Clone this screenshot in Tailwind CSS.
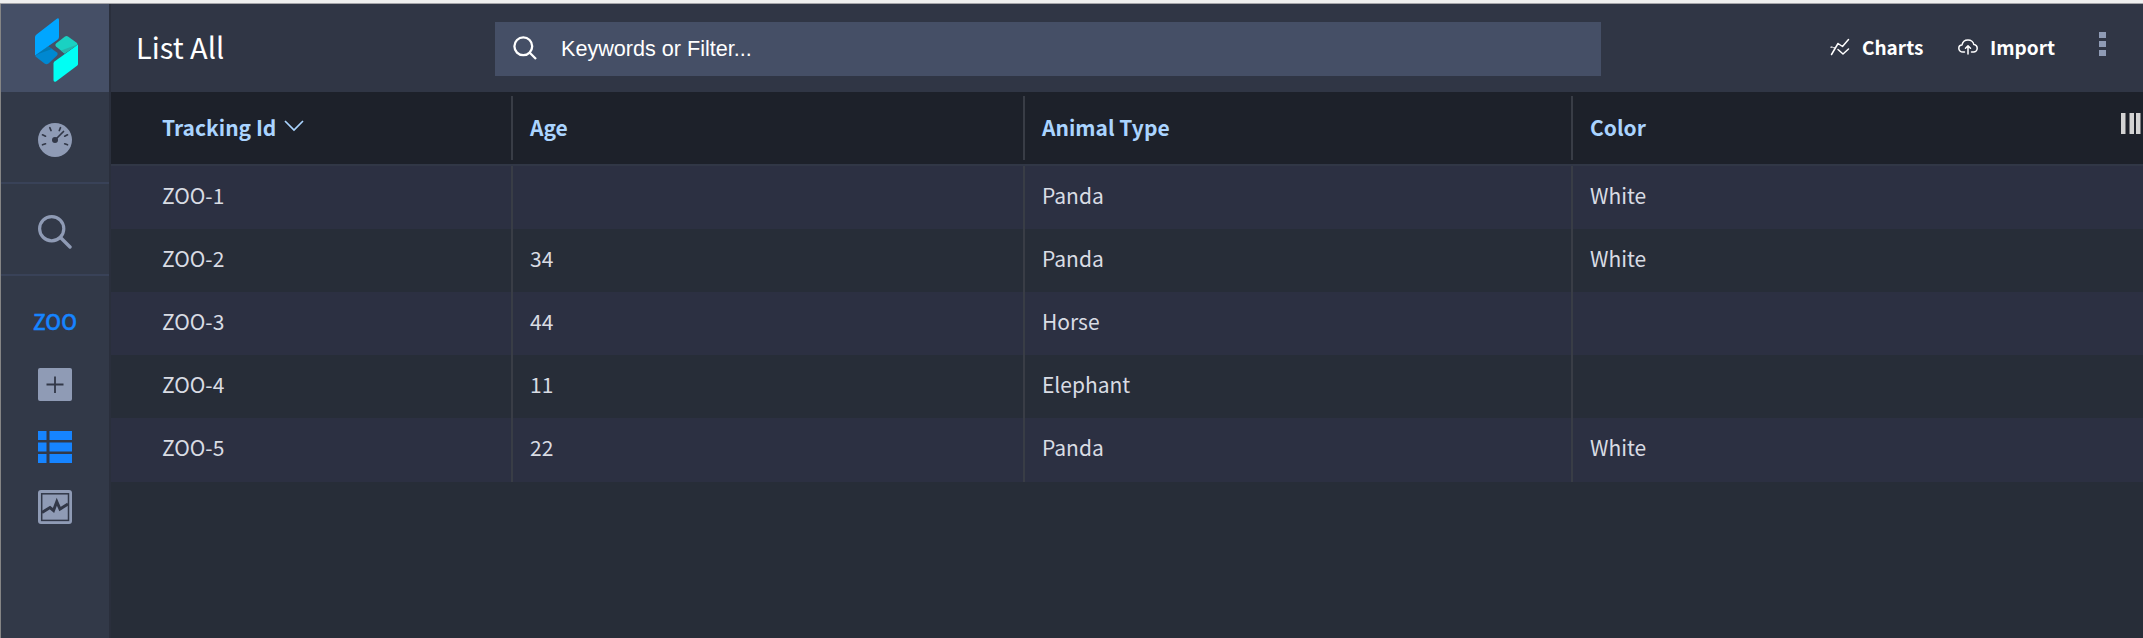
<!DOCTYPE html>
<html lang="en">
<head>
<meta charset="utf-8">
<title>List All</title>
<script src="https://cdn.jsdelivr.net/npm/@tailwindcss/browser@4"></script>
</head>
<body class="w-[2143px] h-[638px] overflow-hidden bg-[#272d38] font-['Noto_Sans_CJK_SC',sans-serif] text-[#d9dce4]">
<div class="flex flex-col h-[638px]">
  <div class="h-1 shrink-0 bg-[#efefef] border-b border-[#a5a5a9]"></div>
  <div class="flex flex-1 border-l border-[#858585]">
    <aside class="w-[110px] shrink-0 bg-[#323948] border-r-2 border-[#2a2f3c] flex flex-col items-stretch">
      <div class="h-[88px] shrink-0 bg-[#454f66] pl-[34px] pt-[14px]">
        <svg class="w-[43px] h-[64px]" viewBox="0 0 43 64">
          <path d="M.5 37.500 13.500 28.500 22 34.500Q23.500 36 22 37.500L13.500 45.500Q11.500 47 9.500 45.500L.5 38.500Z" fill="#0088d1"/>
          <path d="M.5 37 13.500 28.500 17 31Z" fill="#0079b4"/>
          <path d="M42.500 26.500 29.500 35.500 21 28.500Q19.500 27 21 25.500L30 18.500Q31.500 17.500 33 18.500L42 25Z" fill="#1ad1c2"/>
          <path d="M42.500 26.500 29.500 35.500 26 32.500Z" fill="#25b5ab"/>
          <path d="M0 19Q0 17.500 1.500 16.500L21.500 1Q24 -.8 24 2V19Q24 20.500 22.500 21.700L0 37.500Z" fill="#00a6ff"/>
          <path d="M43 26.500V46Q43 47 42 47.800L21 63.500Q18.500 64.500 18.500 62V45.500Q18.500 44.500 19.500 43.500Z" fill="#00fff4"/>
        </svg>
      </div>
      <div class="h-[92px] shrink-0 border-b-2 border-[#394258] flex items-center justify-center pt-1.5">
        <svg class="w-[34px] h-[34px]" viewBox="0 0 34 34">
          <circle cx="17" cy="17" r="17" fill="#8f9bb5"/>
          <g stroke="#323848" stroke-width="1.700" stroke-linecap="round" fill="none"><path d="M4.500 21.800 7.500 20.800M4.500 11.800 7.500 13.200M11.800 4.700 13 7.500M22.500 4.700 21.300 7.500M29.500 11.800 26.700 13.200M29.500 21.800 26.700 20.800M17 17 25.500 8.500"/></g>
          <circle cx="17" cy="17" r="3" fill="#323848"/>
        </svg>
      </div>
      <div class="h-[92px] shrink-0 border-b-2 border-[#394258] flex items-center justify-center pt-1.5">
        <svg class="w-[34px] h-[34px]" viewBox="0 0 34 34" fill="none" stroke="#8f9bb5"><circle cx="13.700" cy="13.700" r="12.100" stroke-width="3.200"/><path d="M22.500 22.500 32 32" stroke-width="3.400" stroke-linecap="round"/></svg>
      </div>
      <div class="flex flex-col items-center pt-[29px]">
        <div class="h-8 leading-8 text-[21px] font-medium text-[#1684ff] [-webkit-text-stroke:0.4px_#1684ff]">ZOO</div>
        <svg class="mt-[31px] w-[34px] h-[33px]" viewBox="0 0 34 33"><rect width="34" height="33" rx="2" fill="#8f9bb5"/><path d="M17 8.500V25M8.500 16.500H25.500" stroke="#323848" stroke-width="1.800"/></svg>
        <svg class="mt-[30px] w-[34px] h-[32px]" viewBox="0 0 34 32" fill="#1684ff"><path d="M0 0H8.500V9H0ZM11.500 0H34V9H11.500ZM0 11.500H8.500V20.500H0ZM11.500 11.500H34V20.500H11.500ZM0 23H8.500V32H0ZM11.500 23H34V32H11.500Z"/></svg>
        <svg class="mt-[27px] w-[34px] h-[34px]" viewBox="0 0 34 34"><rect width="34" height="34" rx="3" fill="#8f9bb5"/><rect x="3.700" y="3.800" width="26.800" height="26.600" fill="none" stroke="#323848" stroke-width="1.500"/><path d="M4 22.500 12 17.500 15.500 20.500 18.800 11.800 22 19 30 14" fill="none" stroke="#323848" stroke-width="3"/></svg>
      </div>
    </aside>
    <main class="flex-1 flex flex-col">
      <header class="h-[88px] shrink-0 bg-[#303645] flex items-center">
        <h1 class="w-[384px] pl-[25px] pb-[3px] text-[29px] text-white">List All</h1>
        <div class="w-[1106px] h-[54px] mt-0.5 bg-[#454f66] flex items-center pl-[18px]">
          <svg class="w-[24px] h-[24px] -mt-0.5" viewBox="0 0 24 24" fill="none" stroke="#fff" stroke-width="2.300"><circle cx="10.300" cy="10.300" r="8.900"/><path d="M16.500 16.500 23 23"/></svg>
          <span class="ml-[24px] font-['Liberation_Sans',sans-serif] text-[21.600px] text-white">Keywords or Filter...</span>
        </div>
        <div class="ml-[229px] flex items-center text-white font-bold text-[19px] pb-[2px]">
          <svg class="w-5 h-[18px] mr-3" viewBox="0 0 20 18" fill="none" stroke="#fff" stroke-width="1.500" stroke-linejoin="round" stroke-linecap="round"><path d="M1.500 16.500 8 5.500 12.500 8.500 18.500 1.500M8 11.500 13 16 18.500 11"/><path d="M1 9.200H2.200M3.800 9.700H4.200" stroke-width="1.300"/></svg>
          <span class="w-[96px]">Charts</span>
          <svg class="w-5 h-[16px] mr-3" viewBox="0 0 20 16" fill="none" stroke="#fff" stroke-width="1.500" stroke-linecap="round" stroke-linejoin="round"><path d="M6.500 13H5C2.500 13 .8 11.500 .8 9.300S2.500 6 4 6C4.500 3 7 1 10 1S15.500 3 15.800 5.500C17.800 5.800 19.200 7.300 19.200 9.300S17.500 13 15.500 13H13.500M10 15V7M7.500 9.200 10 6.700 12.500 9.200"/></svg>
          <span class="w-[109px]">Import</span>
        </div>
        <div class="flex flex-col gap-[3px] mb-[8px]"><i class="w-[7px] h-1.5 bg-[#8f9bb5]"></i><i class="w-[7px] h-1.5 bg-[#8f9bb5]"></i><i class="w-[7px] h-1.5 bg-[#8f9bb5]"></i></div>
      </header>
      <div class="h-[74px] shrink-0 bg-[#1d212a] border-b-2 border-[#313746] grid grid-cols-[402px_512px_548px_1fr] items-center text-[21px] font-bold text-[#aad4ff]">
        <div class="h-16 border-r-2 border-[#393d46] pl-[51px] flex items-center"><span>Tracking Id</span>
          <svg class="ml-2 -mt-[5px] w-5 h-3" viewBox="0 0 20 12" fill="none" stroke="#aad4ff" stroke-width="1.700"><path d="M1 1 10 10 19 1"/></svg></div>
        <div class="h-16 border-r-2 border-[#393d46] pl-[17px] flex items-center"><span>Age</span></div>
        <div class="h-16 border-r-2 border-[#393d46] pl-[17px] flex items-center"><span>Animal Type</span></div>
        <div class="h-16 pl-[17px] pr-0.5 flex items-center justify-between"><span>Color</span>
          <span class="flex gap-[2.500px] -mt-[9px]"><i class="w-[5px] h-[21px] bg-[#d3d3d3] border-r border-[#77777b]"></i><i class="w-[5px] h-[21px] bg-[#d3d3d3] border-l border-[#77777b]"></i><i class="w-[5px] h-[21px] bg-[#d3d3d3] border-r border-[#77777b]"></i></span></div>
      </div>
      <div id="rows" class="text-[21px]"></div>
    </main>
  </div>
</div>
<script>
const data = [['ZOO-1','','Panda','White'],['ZOO-2','34','Panda','White'],['ZOO-3','44','Horse',''],['ZOO-4','11','Elephant',''],['ZOO-5','22','Panda','White']];
document.getElementById('rows').innerHTML = data.map(r =>
 `<div class="h-[63px] last:h-16 grid grid-cols-[402px_512px_548px_1fr] odd:bg-[#2c3042] even:bg-[#272d38]">
  <div class="border-r-2 border-[#393d46] pl-[51px] leading-[59px]">${r[0]}</div>
  <div class="border-r-2 border-[#393d46] pl-[17px] leading-[59px]">${r[1]}</div>
  <div class="border-r-2 border-[#393d46] pl-[17px] leading-[59px]">${r[2]}</div>
  <div class="pl-[17px] leading-[59px]">${r[3]}</div></div>`).join('');
</script>
</body>
</html>
